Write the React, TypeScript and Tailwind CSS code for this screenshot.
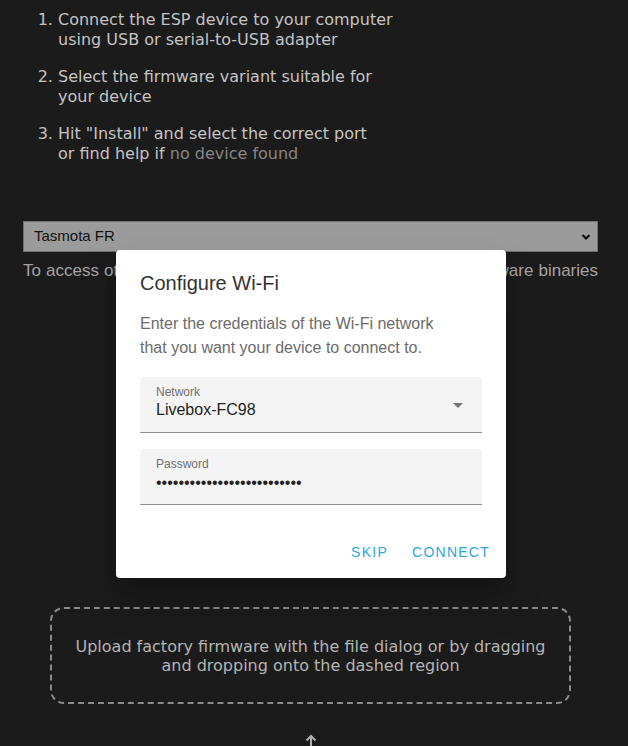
import React from "react";

export default function App() {
  const listFont = { fontFamily: '"DejaVu Sans", Verdana, sans-serif' };
  return (
    <div className="relative min-h-[746px] w-full overflow-hidden bg-[#1c1b1b]">
      <div className="ml-[23px] w-[575px]">
        <ol
          className="list-decimal pl-[35px] pt-[10px] text-[16px] leading-[20px] text-[#c4c4c4] marker:text-[#c4c4c4]"
          style={listFont}
        >
          <li className="mb-[17px]">
            Connect the ESP device to your computer
            <br />
            using USB or serial-to-USB adapter
          </li>
          <li className="mb-[17px]">
            Select the firmware variant suitable for
            <br />
            your device
          </li>
          <li>
            Hit "Install" and select the correct port
            <br />
            or find help if <span className="text-[#868686]">no device found</span>
          </li>
        </ol>

        <div className="mt-[57px] flex flex-col font-['Liberation_Sans',Arial,sans-serif]">
          <div className="flex h-[31px] items-center justify-between border border-[#707070] bg-[#9b9b9b] pl-[10px] pr-[6px] text-[15px] text-[#111]">
            <span>Tasmota FR</span>
            <svg width="10" height="8" viewBox="0 0 10 8">
              <path d="M1.5 2 L5 5.5 L8.5 2" fill="none" stroke="#111" strokeWidth="2.2" />
            </svg>
          </div>
          <p className="mt-[8px] whitespace-nowrap text-[17px] leading-[22px] text-[#a3a3a3] [text-align-last:justify]">
            To access other versions or variants go to the full Tasmota firmware binaries
          </p>
        </div>

        <div
          className="mx-[27px] mt-[325px] flex h-[97px] items-center justify-center rounded-[14px] border-2 border-dashed border-[#8a8a8a] text-center text-[16px] leading-[19px] text-[#b4b4b4]"
          style={listFont}
        >
          <p>
            Upload factory firmware with the file dialog or by dragging
            <br />
            and dropping onto the dashed region
          </p>
        </div>

        <div className="mt-[30px] flex justify-center">
          <svg width="14" height="14" viewBox="0 0 14 14">
            <path d="M7 13 V2 M2.5 6.5 L7 2 L11.5 6.5" fill="none" stroke="#b0b0b0" strokeWidth="2" />
          </svg>
        </div>
      </div>

      <div className="absolute left-[116px] top-[250px] w-[390px] rounded-[4px] bg-white pb-[8px] shadow-[0_11px_15px_-7px_rgba(0,0,0,0.2),0_24px_38px_3px_rgba(0,0,0,0.14)] font-['Liberation_Sans',Arial,sans-serif]">
        <div className="px-[24px] pt-[17px]">
          <h2 className="text-[20px] leading-[32px] text-[#333333]">Configure Wi-Fi</h2>
          <p className="mt-[13px] text-[16px] leading-[24px] text-[#6b6b6b]">
            Enter the credentials of the Wi-Fi network
            <br />
            that you want your device to connect to.
          </p>

          <div className="relative mt-[17px] h-[56px] rounded-t-[4px] border-b border-[#8f8f8f] bg-[#f4f4f4] pl-[16px] pt-[7px]">
            <div className="text-[12px] leading-[16px] text-[#707070]">Network</div>
            <div className="text-[16px] leading-[20px] text-[#222222]">Livebox-FC98</div>
            <svg
              width="10"
              height="5"
              viewBox="0 0 10 5"
              className="absolute right-[19px] top-[26px]"
            >
              <path d="M0 0 L10 0 L5 5 Z" fill="#757575" />
            </svg>
          </div>

          <div className="mt-[16px] h-[56px] rounded-t-[4px] border-b border-[#8f8f8f] bg-[#f4f4f4] pl-[16px] pt-[7px]">
            <div className="text-[12px] leading-[16px] text-[#707070]">Password</div>
            <div className="text-[16px] leading-[22px] text-[#222222]">
              ••••••••••••••••••••••••••
            </div>
          </div>
        </div>

        <div className="mt-[29px] flex justify-end gap-[8px] px-[8px]">
          <button className="h-[36px] px-[8px] text-[14px] font-normal uppercase tracking-[1.25px] text-[#2aa7dc]">
            Skip
          </button>
          <button className="h-[36px] px-[8px] text-[14px] font-normal uppercase tracking-[1.25px] text-[#2aa7dc]">
            Connect
          </button>
        </div>
      </div>
    </div>
  );
}
